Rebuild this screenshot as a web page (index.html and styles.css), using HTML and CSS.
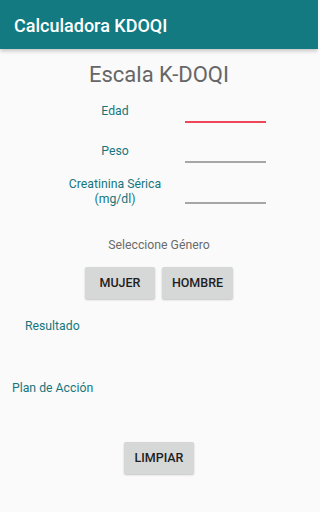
FILE: index.html
```html
<!DOCTYPE html>
<html lang="es">
<head>
<meta charset="utf-8">
<title>Calculadora KDOQI</title>
<link rel="stylesheet" href="styles.css">
</head>
<body>
<header class="appbar"><span class="appbar-title">Calculadora KDOQI</span></header>
<main class="content">
  <h1 class="heading">Escala K-DOQI</h1>
  <div class="row row-edad">
    <div class="label">Edad</div>
    <div class="field field-active"></div>
  </div>
  <div class="row row-peso">
    <div class="label">Peso</div>
    <div class="field"></div>
  </div>
  <div class="row row-creat">
    <div class="label label-two">Creatinina Sérica<br>(mg/dl)</div>
    <div class="field field-low"></div>
  </div>
  <div class="gender-title">Seleccione Género</div>
  <div class="btn-row">
    <button class="btn btn-mujer">MUJER</button>
    <button class="btn btn-hombre">HOMBRE</button>
  </div>
  <div class="out out-result">Resultado</div>
  <div class="out out-plan">Plan de Acción</div>
  <div class="btn-row btn-row-clear">
    <button class="btn btn-clear">LIMPIAR</button>
  </div>
</main>
</body>
</html>
```
FILE: styles.css
```css
html, body {
  margin: 0;
  padding: 0;
}
body {
  width: 318px;
  height: 512px;
  background: #fafafa;
  font-family: Roboto, "Noto Sans", "Liberation Sans", sans-serif;
  overflow: hidden;
}
.appbar {
  height: 49px;
  background: #127a80;
  box-shadow: 0 2px 4px rgba(0, 0, 0, 0.22);
  display: flex;
  align-items: center;
  padding: 3px 0 0 14px;
  box-sizing: border-box;
  position: relative;
  z-index: 1;
}
.appbar-title {
  color: #ffffff;
  font-size: 18px;
  font-weight: 500;
  line-height: 22px;
}
.content {
  display: flex;
  flex-direction: column;
}
.heading {
  margin: 13px 0 0;
  font-size: 22px;
  line-height: 26px;
  font-weight: 400;
  color: #666666;
  text-align: center;
}
.row {
  display: flex;
  align-items: flex-end;
}
.row-edad { margin-top: 13px; }
.row-peso { margin-top: 18px; }
.row-creat { margin-top: 14px; }
.label {
  width: 130px;
  margin-left: 50px;
  margin-bottom: 4px;
  font-size: 12.25px;
  line-height: 16px;
  color: #17767d;
  text-align: center;
}
.label-two {
  line-height: 14.5px;
  margin-bottom: 0;
}
.field {
  width: 81px;
  height: 20px;
  margin-left: 5px;
  border-bottom: 2px solid #a6a6a6;
}
.field-active {
  border-bottom-color: #f0465a;
}
.field-low {
  margin-bottom: 2px;
}
.gender-title {
  margin-top: 31px;
  font-size: 12.25px;
  line-height: 16px;
  color: #6b6b6b;
  text-align: center;
}
.btn-row {
  display: flex;
  justify-content: center;
  gap: 7px;
  margin-top: 14px;
}
.btn {
  height: 32px;
  padding: 0;
  border: none;
  border-radius: 2px;
  background: #d6d7d7;
  box-shadow: 0 1px 2px rgba(0, 0, 0, 0.22);
  font-family: Roboto, "Noto Sans", "Liberation Sans", sans-serif;
  font-size: 12.5px;
  font-weight: 500;
  line-height: 16px;
  color: #1e1e1e;
}
.btn-mujer { width: 70px; }
.btn-hombre { width: 71px; }
.btn-clear { width: 70px; }
.out {
  font-size: 12.25px;
  line-height: 16px;
  color: #17767d;
}
.out-result {
  margin-top: 19px;
  padding-left: 25px;
}
.out-plan {
  margin-top: 46px;
  padding-left: 12px;
}
.btn-row-clear {
  margin-top: 46px;
}
```
